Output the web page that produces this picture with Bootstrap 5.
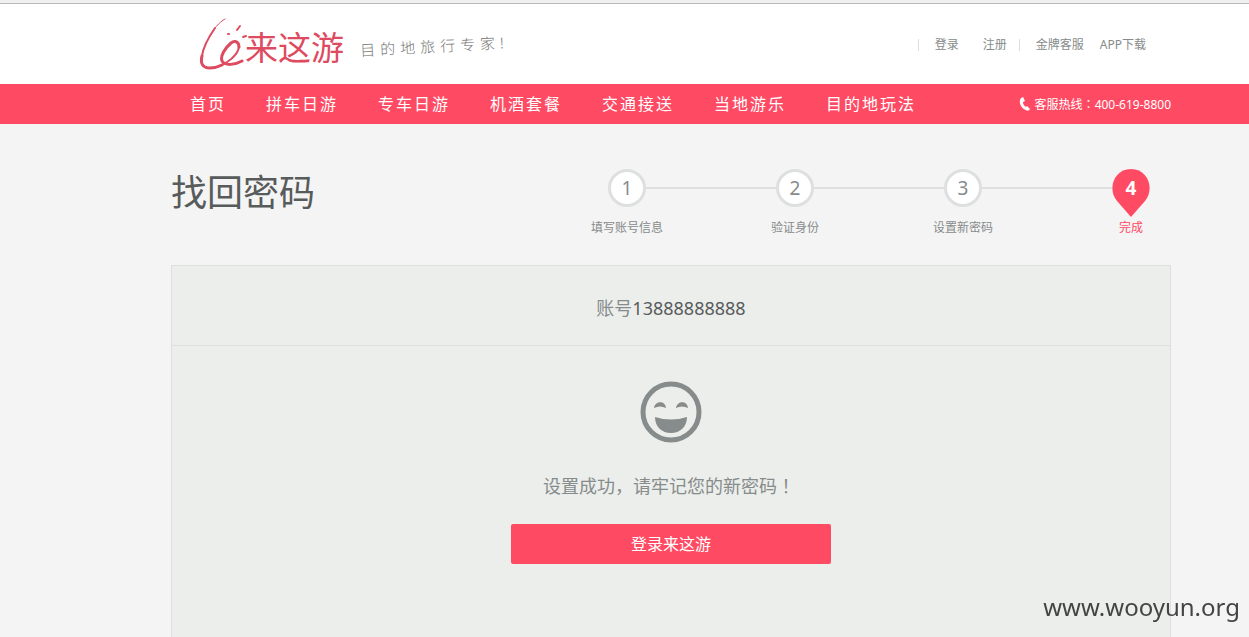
<!DOCTYPE html>
<html lang="zh-CN">
<head>
<meta charset="utf-8">
<meta name="viewport" content="width=device-width, initial-scale=1">
<title>找回密码 - 来这游</title>
<link href="https://cdn.jsdelivr.net/npm/bootstrap@5.3.0/dist/css/bootstrap.min.css" rel="stylesheet">
<style>
:root{--brand:#ff4a63;--grey:#868b8b;--ink:#585b5b;--line:#dde0df}
body{background:#f4f4f4;color:var(--grey);font-family:"Noto Sans","Noto Sans CJK SC",sans-serif;font-size:12px;line-height:20px}
a{color:inherit;text-decoration:none}
.full-punct{font-family:"Noto Sans CJK TC",sans-serif}
.top-strip{height:4px;background:#f0f0f0;border-bottom:1px solid #b9b9b9}
.band{padding-left:93px}
.page-wrap{width:100%;max-width:1000px;margin:0 auto}
.site-head{height:80px}
.logo{margin-left:28px;color:#de4a60}
.logo-name{font-size:33px;line-height:48px;margin-left:-4px;padding-top:8px}
.slogan{font-size:15px;letter-spacing:5px;color:#777;font-weight:300;transform:rotate(-3deg);margin-left:16px;padding-top:4px}
.top-links{margin-right:25px;padding-top:2px}
.bar-sep{width:1px;height:12px;background:#ddd}
.main-nav{background:var(--brand);color:#fff}
.main-nav .page-wrap{min-height:40px}
.nav-items{gap:40px;font-size:16px;letter-spacing:2px;padding-left:19px}
.title-row{padding-top:45px}
.page-title{font-size:36px;font-weight:400;line-height:48px;color:var(--ink)}
.steps{margin-right:-44px;margin-bottom:27px}
.steps li{width:168px;position:relative}
.steps li+li::before{content:"";position:absolute;left:-65px;top:18px;width:130px;height:2px;background:var(--line)}
.step-dot{width:38px;height:38px;border:3px solid var(--line);border-radius:50%;background:#fff;font-size:19px}
.step-label{margin-top:11px}
.step-now .step-label{color:var(--brand);margin-top:1px}
.pin{width:38px;height:48px}
.panel{background:#eceeeb;border:1px solid var(--line);border-bottom:0}
.panel-head{height:80px;border-bottom:1px solid var(--line);font-size:18px}
.account-no{color:var(--ink)}
.panel-body{padding-top:35px}
.message{font-size:18px;line-height:28px;margin-top:28px;padding-right:4px}
.btn-brand{--bs-btn-bg:var(--brand);--bs-btn-color:#fff;--bs-btn-hover-bg:#ed3e57;--bs-btn-hover-color:#fff;--bs-btn-border-radius:2px;width:320px;max-width:100%;height:40px;font-size:16px;line-height:24px;margin-top:24px}
.site-mark{right:9px;bottom:12px;font-size:24px;line-height:36px;color:#444}
</style>
</head>
<body class="overflow-x-hidden d-flex flex-column min-vh-100">
<div class="top-strip"></div>
<header class="band bg-white">
  <div class="page-wrap site-head d-flex align-items-center justify-content-between">
    <div class="d-flex align-items-center">
      <a href="#" class="logo d-flex align-items-center">
        <svg width="50" height="54" viewBox="0 0 50 54" fill="none" stroke="currentColor" stroke-linecap="round" stroke-linejoin="round" aria-hidden="true">
          <path d="M26 2C20 5 14 13 11 19" stroke-width="1"/>
          <path d="M16 11C9 21 4 32 3 39c-2 8 1 12 8 12 6 0 11-2 17-6 7-4 12-11 12-16 0-4-3-6-6-4" stroke-width="2"/>
          <path d="M3 39c-2 8 1 12 8 12 4 0 8-1 12-3M40 30c0-5-4-7-8-4-6 5-11 13-9 18 3 5 13 4 20 0" stroke-width="3"/>
          <path d="M29 17h1M38 13l3-4M44 20l3-1" stroke-width="2"/>
        </svg>
        <span class="logo-name">来这游</span>
      </a>
      <span class="slogan">目的地旅行专家!</span>
    </div>
    <div class="top-links d-flex align-items-center">
      <span class="bar-sep me-3"></span>
      <a href="#" class="me-4">登录</a>
      <a href="#" class="me-2">注册</a>
      <span class="bar-sep me-3 ms-1"></span>
      <a href="#" class="me-3">金牌客服</a>
      <a href="#">APP下载</a>
    </div>
  </div>
</header>
<nav class="main-nav band">
  <div class="page-wrap d-flex align-items-center justify-content-between">
    <div class="nav-items d-flex">
      <a href="#">首页</a><a href="#">拼车日游</a><a href="#">专车日游</a><a href="#">机酒套餐</a><a href="#">交通接送</a><a href="#">当地游乐</a><a href="#">目的地玩法</a>
    </div>
    <div class="d-flex align-items-center">
      <svg width="12" height="14" viewBox="0 0 12 14" fill="currentColor" class="me-1" aria-hidden="true"><path d="M2 1 4 0l2 4-2 1c0 2 1 4 3 5l1-1 3 3c-1 2-3 2-4 1C2 11-1 5 2 1Z"/></svg>
      <span>客服热线<span class="full-punct" lang="zh-TW">：</span>400-619-8800</span>
    </div>
  </div>
</nav>
<main class="band flex-grow-1 d-flex">
  <div class="page-wrap d-flex flex-column">
    <div class="title-row d-flex justify-content-between">
      <h1 class="page-title mb-0">找回密码</h1>
      <ol class="steps d-flex list-unstyled text-center">
        <li><div class="step-dot d-flex align-items-center justify-content-center mx-auto">1</div><div class="step-label">填写账号信息</div></li>
        <li><div class="step-dot d-flex align-items-center justify-content-center mx-auto">2</div><div class="step-label">验证身份</div></li>
        <li><div class="step-dot d-flex align-items-center justify-content-center mx-auto">3</div><div class="step-label">设置新密码</div></li>
        <li class="step-now">
          <svg class="pin d-block mx-auto" viewBox="0 0 38 48"><path fill="#ff4a63" d="M19 48 5 32C-5 20 2 0 19 0s24 20 14 32Z"/><text x="19" y="26" text-anchor="middle" font-size="19" font-weight="700" fill="#fff">4</text></svg>
          <div class="step-label">完成</div></li>
      </ol>
    </div>
    <section class="panel flex-grow-1">
      <div class="panel-head d-flex align-items-center justify-content-center pt-1"><span>账号<span class="account-no">13888888888</span></span></div>
      <div class="panel-body d-flex flex-column align-items-center">
        <svg width="62" height="62" viewBox="0 0 62 62" aria-hidden="true"><circle cx="31" cy="31" r="28" fill="none" stroke="#868b8b" stroke-width="5"/><path fill="#868b8b" d="M14 27c1-7 11-8 12 0-4-2-8-2-12 0ZM36 27c1-7 11-8 12 0-4-2-8-2-12 0ZM15 36q16 5 32 0c0 10-7 16-16 16S15 46 15 36Z"/></svg>
        <p class="message mb-0">设置成功，请牢记您的新密码<span class="full-punct" lang="zh-TW">！</span></p>
        <button type="button" class="btn btn-brand">登录来这游</button>
      </div>
    </section>
  </div>
</main>
<div class="site-mark position-fixed">www.wooyun.org</div>
<script src="https://cdn.jsdelivr.net/npm/bootstrap@5.3.0/dist/js/bootstrap.bundle.min.js"></script>
</body>
</html>
